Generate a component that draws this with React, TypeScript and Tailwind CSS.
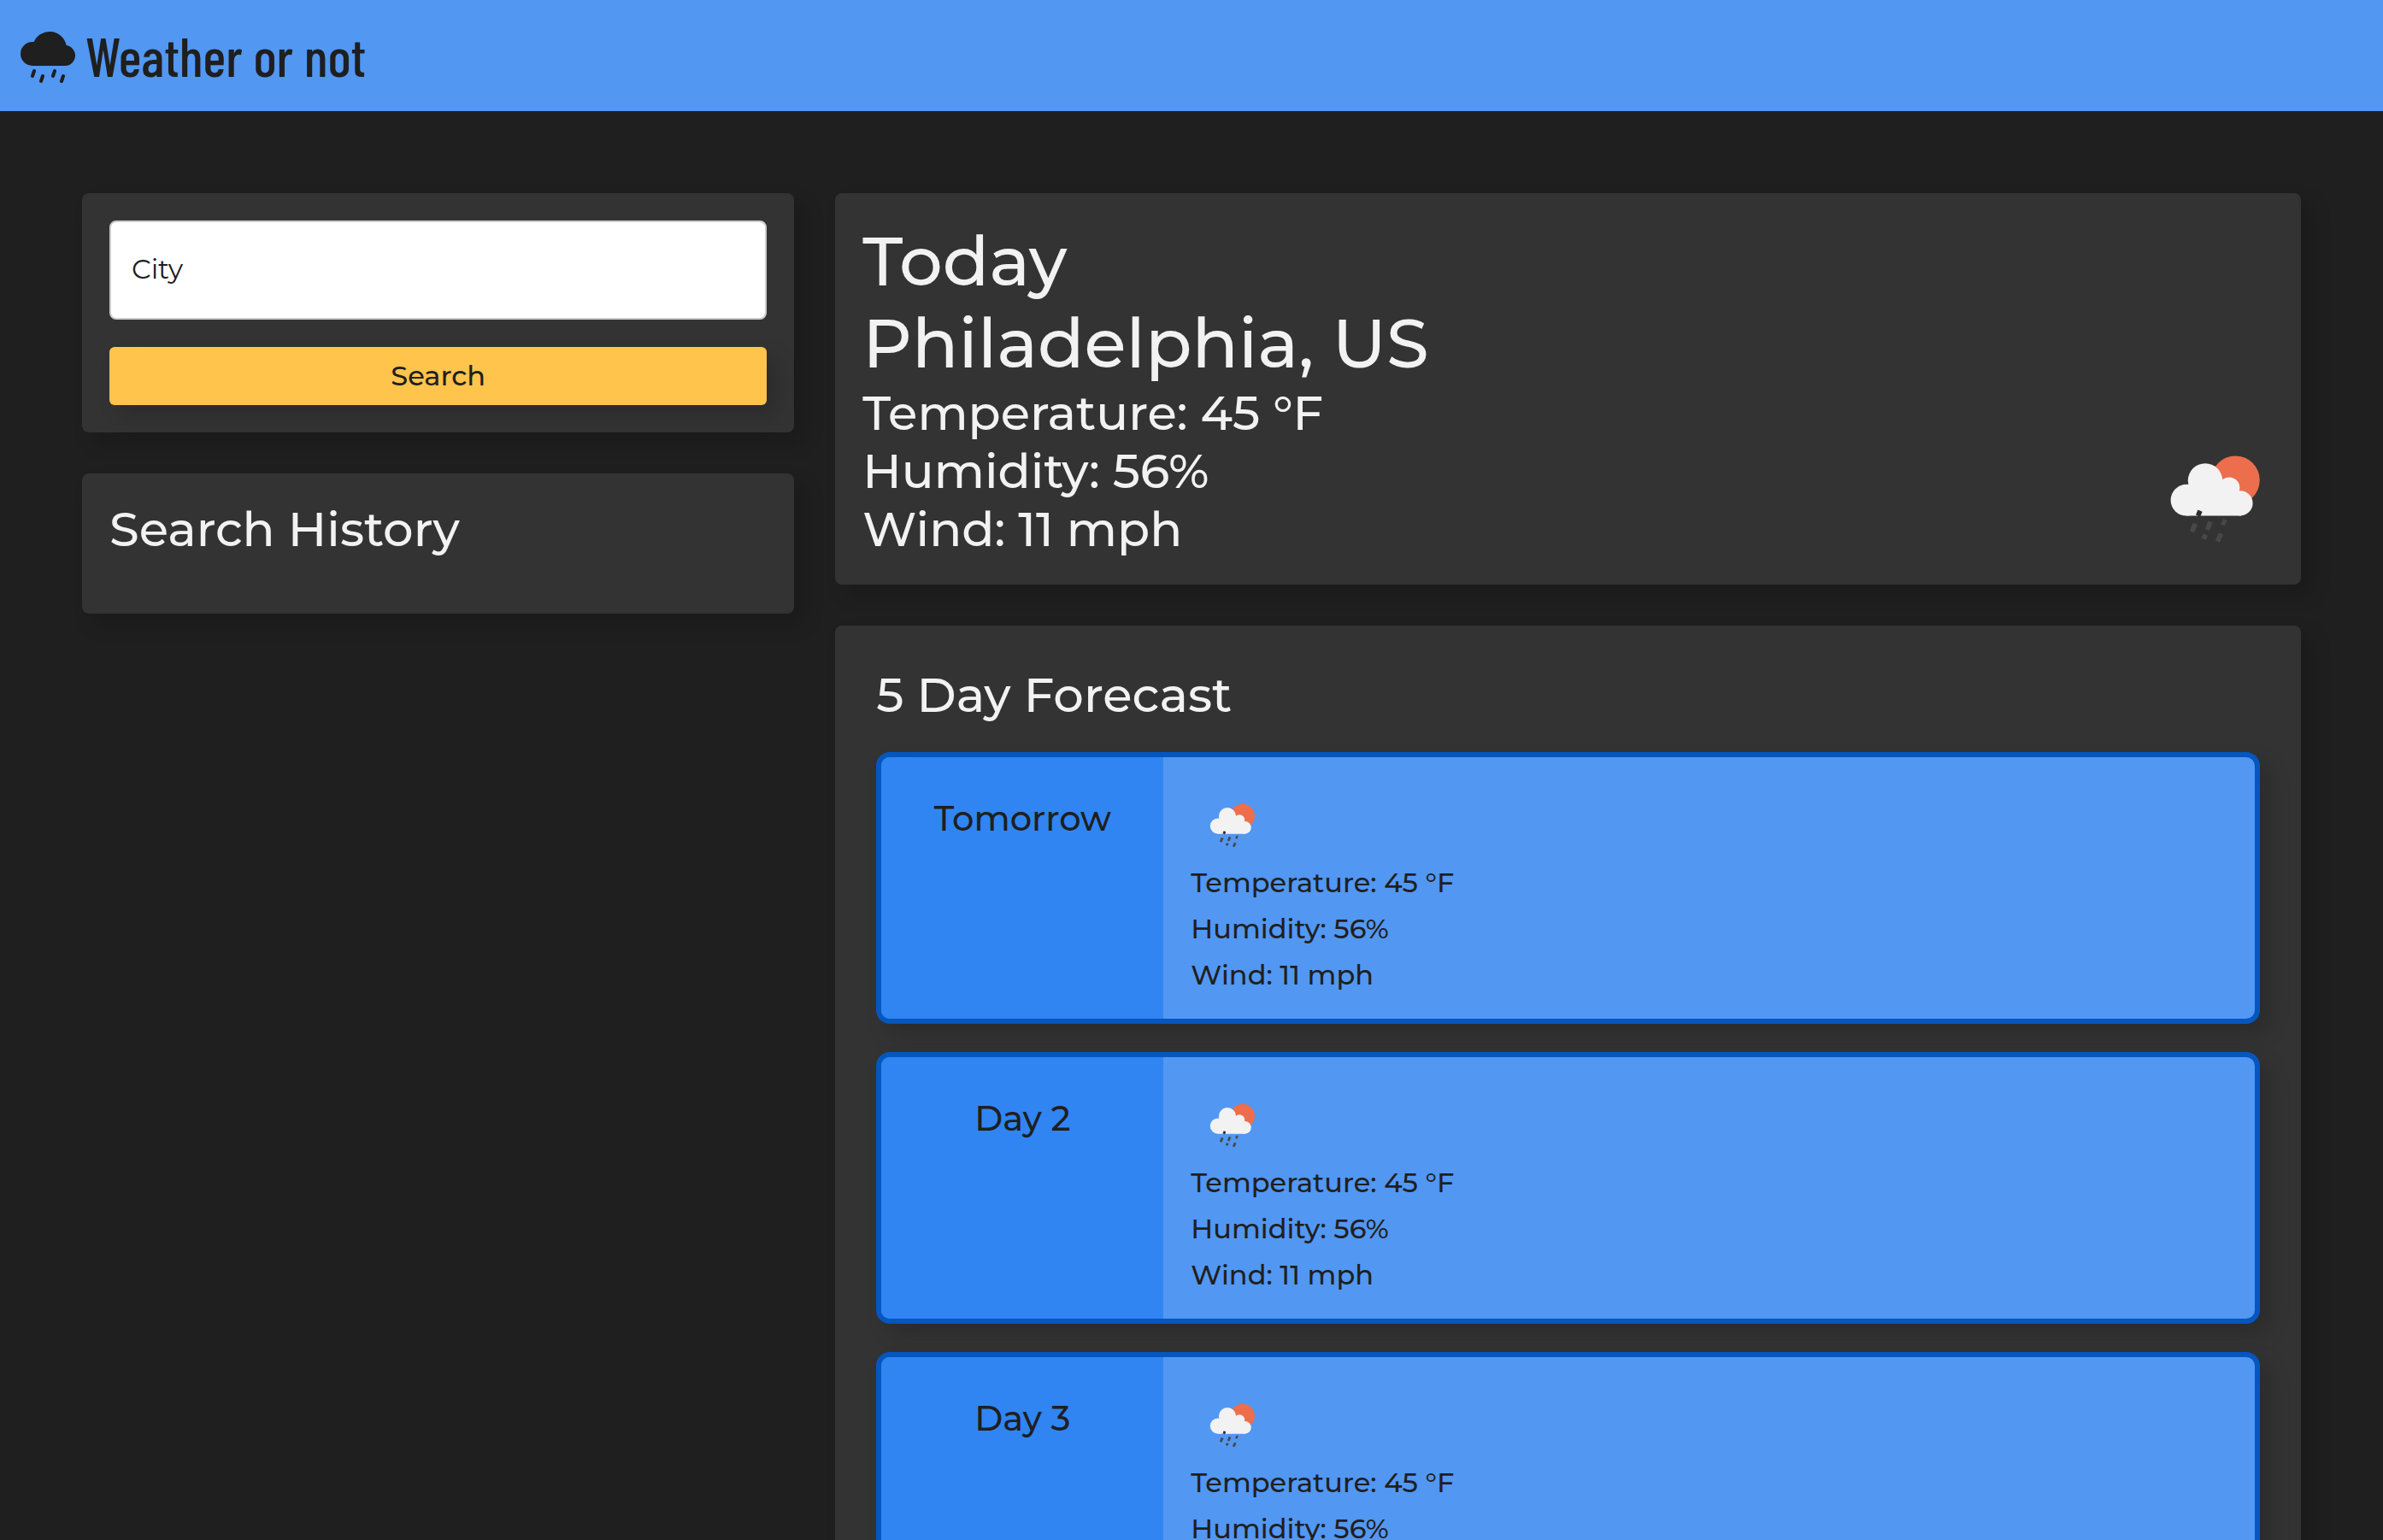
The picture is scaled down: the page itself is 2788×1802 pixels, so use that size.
import { BsCloudDrizzleFill } from "react-icons/bs";

const days = ["Tomorrow", "Day 2", "Day 3", "Day 4", "Day 5"];
const readings = ["Temperature: 45 °F", "Humidity: 56%", "Wind: 11 mph"];

function ShowerIcon({ className, viewBox }: { className: string; viewBox: string }) {
  return (
    <svg className={className} viewBox={viewBox} role="img" aria-label="Shower rain">
      <circle cx="61.7" cy="38.9" r="14.2" fill="#ec6e4c" />
      <g fill="#f2f2f2">
        <circle cx="33" cy="50.6" r="9.2" />
        <circle cx="44" cy="39.2" r="10.1" />
        <circle cx="58" cy="43.4" r="6.2" />
        <circle cx="64.5" cy="52.4" r="7.3" />
        <path d="M33 59.8V45L44 39l15 5 6 8v7.7z" />
      </g>
      <g stroke="#48484a" strokeWidth="2.8">
        <path d="M41 56.8l-1.2 3" stroke="#2b2b2b" />
        <path d="M38.2 64.4l-2 4.8M47 63.2l-1.8 4.8M44.2 70.6l-1 2.8M53.2 70.2l-2 4.6" />
        <path d="M55.6 62l-1.4 3.2" strokeWidth="2.4" />
      </g>
    </svg>
  );
}

export default function App() {
  return (
    <div className="min-h-screen bg-[#1f1f1f] pb-24 font-['Montserrat','Inter',sans-serif] font-medium text-[#f2f2f2]">
      <header className="flex h-[130px] items-center gap-3 bg-[#5297f2] px-6 text-[#1f1f1f]">
        <BsCloudDrizzleFill className="size-16" aria-hidden="true" />
        <h1 className="font-['Barlow_Condensed','Roboto_Condensed',sans-serif] text-[64px] leading-[76px] font-medium">
          Weather or not
        </h1>
      </header>

      <main className="flex items-start px-[72px] pt-24">
        <aside className="flex w-1/3 flex-col gap-12 px-6">
          <form className="flex flex-col gap-8 rounded-lg bg-[#333333] p-8 shadow-[12px_12px_24px_rgba(0,0,0,0.16)]">
            <input
              type="text"
              aria-label="City"
              placeholder="City"
              className="h-[116px] w-full rounded-lg border-2 border-[#cccccc] bg-white px-6 pb-1 text-[32px] font-normal text-[#1f1f1f] placeholder:text-[#1f1f1f]"
            />
            <button
              type="button"
              className="h-[68px] rounded-md bg-[#ffc44b] text-[32px] text-[#1f1f1f] shadow-[12px_12px_24px_rgba(0,0,0,0.16)]"
            >
              Search
            </button>
          </form>
          <section className="rounded-lg bg-[#333333] p-8 pb-[66px] shadow-[12px_12px_24px_rgba(0,0,0,0.16)]">
            <h2 className="text-[56px] leading-[66px]">Search History</h2>
          </section>
        </aside>

        <div className="flex w-2/3 flex-col gap-12 px-6">
          <section className="flex justify-between rounded-lg bg-[#333333] pl-8 shadow-[12px_12px_24px_rgba(0,0,0,0.16)]">
            <div className="py-8">
              <h2 className="text-[80px] leading-[96px]">Today</h2>
              <h2 className="text-[80px] leading-[96px]">Philadelphia, US</h2>
              <div className="flex flex-col gap-0.5">
                {readings.map((reading) => (
                  <p key={reading} className="text-[56px] leading-[66px]">
                    {reading}
                  </p>
                ))}
              </div>
            </div>
            <ShowerIcon className="size-[200px] self-end" viewBox="0 0 100 100" />
          </section>

          <section className="rounded-lg bg-[#333333] p-12 shadow-[12px_12px_24px_rgba(0,0,0,0.16)]">
            <h2 className="mb-[34px] text-[56px] leading-[66px]">5 Day Forecast</h2>
            <div className="flex flex-col gap-[33px]">
              {days.map((day) => (
                <article
                  key={day}
                  className="flex overflow-hidden rounded-2xl border-6 border-[#0556bf] bg-[#5297f2] text-[#1f1f1f] shadow-[12px_12px_24px_rgba(0,0,0,0.16)]"
                >
                  <h3 className="w-[330px] shrink-0 bg-[#3085f3] pt-12 text-center text-[40px] leading-[48px]">{day}</h3>
                  <div className="flex flex-col gap-4 p-8">
                    <ShowerIcon className="-mb-4 h-24 w-[100px]" viewBox="1 2 100 96" />
                    {readings.map((reading) => (
                      <p key={reading} className="text-[32px] leading-[38px]">
                        {reading}
                      </p>
                    ))}
                  </div>
                </article>
              ))}
            </div>
          </section>
        </div>
      </main>
    </div>
  );
}
